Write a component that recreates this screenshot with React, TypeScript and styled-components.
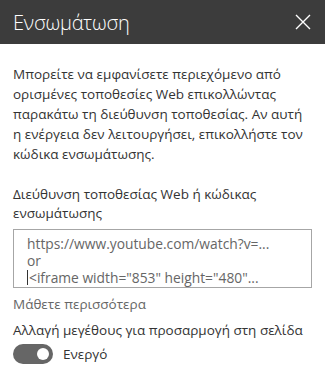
import styled, { createGlobalStyle } from "styled-components";

const GlobalStyle = createGlobalStyle`
    html, body {
        margin: 0;
        padding: 0;
        background: #ffffff;
    }
    body {
        font-family: "Open Sans", "Noto Sans", sans-serif;
        color: #333333;
    }
`;

const Panel = styled.div`
    width: 325px;
    height: 381px;
    background: #ffffff;
    overflow: hidden;
`;

const Header = styled.div`
    height: 44px;
    background-color: #3c3c3c;
    display: flex;
    align-items: center;
    justify-content: space-between;
    padding: 0 14px 0 13px;
`;

const Title = styled.h1`
    margin: 0;
    font-size: 20px;
    font-weight: 300;
    color: #ffffff;
    letter-spacing: -0.2px;
`;

const CloseButton = styled.button`
    border: none;
    background: transparent;
    padding: 0;
    width: 16px;
    height: 16px;
    display: flex;
    align-items: center;
    justify-content: center;
    cursor: pointer;
`;

const Content = styled.div`
    padding: 20px 13px 0 13px;
`;

const Intro = styled.p`
    margin: 0;
    font-size: 13.5px;
    line-height: 20px;
    color: #333333;
`;

const FieldLabel = styled.label`
    display: block;
    margin-top: 21px;
    font-size: 13.5px;
    line-height: 19px;
    color: #333333;
`;

const EmbedBox = styled.div`
    margin-top: 6px;
    height: 52px;
    border: 1px solid #a6a6a6;
    padding: 5px 12px 0 13px;
    font-size: 13.8px;
    line-height: 17px;
    color: #666666;
    overflow: hidden;
    white-space: nowrap;
`;

const EmbedLine = styled.div`
    display: flex;
    align-items: center;
    height: 17px;
`;

const Caret = styled.span`
    display: inline-block;
    width: 1px;
    height: 15px;
    background: #333333;
    margin-right: 1px;
`;

const LearnMore = styled.a`
    display: block;
    margin-top: 7px;
    font-size: 13.5px;
    line-height: 19px;
    color: #666666;
    text-decoration: none;
`;

const ToggleLabel = styled.div`
    margin-top: 7px;
    font-size: 13.5px;
    line-height: 19px;
    color: #333333;
`;

const ToggleRow = styled.div`
    display: flex;
    align-items: center;
    gap: 10px;
    margin-top: 4px;
`;

const Track = styled.div<{ $on: boolean }>`
    width: 40px;
    height: 20px;
    border-radius: 10px;
    background: ${(p) => (p.$on ? "#666666" : "#c8c8c8")};
    display: flex;
    align-items: center;
    justify-content: ${(p) => (p.$on ? "flex-end" : "flex-start")};
    padding: 0 4px;
    box-sizing: border-box;
`;

const Knob = styled.div`
    width: 12px;
    height: 12px;
    border-radius: 50%;
    background: #ffffff;
`;

const ToggleText = styled.span`
    font-size: 13.5px;
    color: #333333;
`;

export default function App() {
    return (
        <Panel>
            <GlobalStyle />
            <Header>
                <Title>Ενσωμάτωση</Title>
                <CloseButton aria-label="Κλείσιμο">
                    <svg width="16" height="16" viewBox="0 0 16 16">
                        <path d="M1 1 L15 15 M15 1 L1 15" stroke="#ffffff" strokeWidth="1.4" fill="none" />
                    </svg>
                </CloseButton>
            </Header>
            <Content>
                <Intro>
                    Μπορείτε να εμφανίσετε περιεχόμενο από
                    <br />
                    ορισμένες τοποθεσίες Web επικολλώντας
                    <br />
                    παρακάτω τη διεύθυνση τοποθεσίας. Αν αυτή
                    <br />
                    η ενέργεια δεν λειτουργήσει, επικολλήστε τον
                    <br />
                    κώδικα ενσωμάτωσης.
                </Intro>
                <FieldLabel>
                    Διεύθυνση τοποθεσίας Web ή κώδικας
                    <br />
                    ενσωμάτωσης
                </FieldLabel>
                <EmbedBox>
                    <EmbedLine>https://www.youtube.com/watch?v=...</EmbedLine>
                    <EmbedLine>or</EmbedLine>
                    <EmbedLine>
                        <Caret />
                        &lt;iframe width="853" height="480"...
                    </EmbedLine>
                </EmbedBox>
                <LearnMore href="#">Μάθετε περισσότερα</LearnMore>
                <ToggleLabel>Αλλαγή μεγέθους για προσαρμογή στη σελίδα</ToggleLabel>
                <ToggleRow>
                    <Track $on>
                        <Knob />
                    </Track>
                    <ToggleText>Ενεργό</ToggleText>
                </ToggleRow>
            </Content>
        </Panel>
    );
}
